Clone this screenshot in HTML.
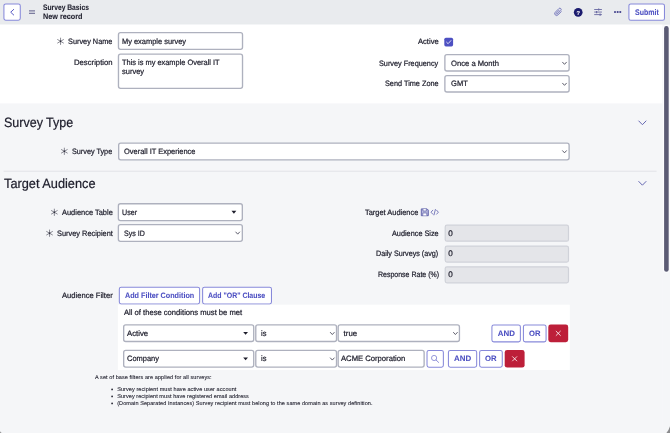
<!DOCTYPE html>
<html><head><meta charset="utf-8"><title>Survey Basics</title>
<style>
html,body{margin:0;padding:0;}
body{width:670px;height:433px;overflow:hidden;position:relative;background:#f5f6f8;font-family:"Liberation Sans",sans-serif;}
#w{position:absolute;left:0;top:0;width:670px;height:433px;will-change:transform;}
#g{position:absolute;left:0;top:0;display:block;}
.t{position:absolute;transform-origin:0 0;white-space:pre;line-height:10px;display:block;text-rendering:geometricPrecision;-webkit-text-stroke:0.22px currentColor;}
</style></head><body><div id="w">
<svg id="g" width="670" height="433" viewBox="0 0 670 433">
<rect x="0.00" y="0.00" width="670.00" height="24.40" rx="0.00" fill="#e9ebee"/>
<rect x="0.00" y="23.90" width="670.00" height="0.60" rx="0.00" fill="#e2e4e9"/>
<rect x="0.00" y="24.50" width="662.60" height="79.10" rx="0.00" fill="#fff"/>
<rect x="0.00" y="103.60" width="662.60" height="329.40" rx="0.00" fill="#f5f6f8"/>
<rect x="662.60" y="24.50" width="7.40" height="408.50" rx="0.00" fill="#f5f6f8"/>
<rect x="663.10" y="25.10" width="6.60" height="247.70" rx="3.30" fill="#fdfdfe"/>
<rect x="664.10" y="26.10" width="4.60" height="245.70" rx="2.30" fill="#5b5b74"/>
<path d="M0 431.0A2 2 0 0 0 2 433L0 433Z" fill="#6f6f6f"/>
<path d="M670 426.3Q668.8 430.5 666.4 433L670 433Z" fill="#8b8b8d"/>
<rect x="3.92" y="3.92" width="16.35" height="16.25" rx="1.88" fill="#fff" stroke="#8789da" stroke-width="1.05"/>
<g transform="translate(10.10 9.00)"><path d="M3.6 0.4 L0.6 3.2 L3.6 6" fill="none" stroke="#5a5cc4" stroke-width="1.0" stroke-linecap="round" stroke-linejoin="round"/></g>
<rect x="29.00" y="10.30" width="6.00" height="1.15" rx="0.00" fill="#707096"/>
<rect x="29.00" y="12.75" width="6.00" height="1.15" rx="0.00" fill="#707096"/>
<g transform="translate(558.3 11.9) rotate(45)" fill="none" stroke="#6668b6" stroke-width="0.8" stroke-linecap="round"><path d="M1.9 -2.2V2.4A1.9 1.9 0 0 1 -1.9 2.4V-2.8A1.3 1.3 0 0 1 0.7 -2.8V2.2A0.65 0.65 0 0 1 -0.6 2.2V-1.8"/></g>
<g transform="translate(573.90 8.05)"><circle cx="4.3" cy="4.3" r="4.35" fill="#1b1b6e"/></g>
<g transform="translate(594.00 8.20)"><g stroke="#6868a2" stroke-width="0.9" fill="none"><path d="M0.2 1.3H7.9M0.2 3.85H7.9M0.2 6.4H7.9"/><path d="M4.7 0.2V2.4M2.6 2.75V4.95M6.1 5.3V7.5" stroke-width="1.1"/></g></g>
<rect x="614.10" y="11.00" width="1.80" height="2.00" rx="0.50" fill="#4c4c92"/>
<rect x="616.75" y="11.00" width="1.80" height="2.00" rx="0.50" fill="#4c4c92"/>
<rect x="619.40" y="11.00" width="1.80" height="2.00" rx="0.50" fill="#4c4c92"/>
<rect x="628.92" y="3.92" width="35.55" height="16.35" rx="1.88" fill="#fff" stroke="#8789da" stroke-width="1.05"/>
<g transform="translate(60.55 41.30)"><g stroke="#3c3c4c" stroke-width="0.6" stroke-linecap="round"><path d="M0 -3.2V3.2M-2.9 -1.7L2.9 1.7M-2.9 1.7L2.9 -1.7"/></g><circle r="0.7" fill="#2a2a38"/></g>
<rect x="118.47" y="32.58" width="124.05" height="16.85" rx="2.12" fill="#fff" stroke="#aeb1be" stroke-width="1.35"/>
<rect x="118.47" y="54.08" width="124.05" height="34.35" rx="2.12" fill="#fff" stroke="#aeb1be" stroke-width="1.35"/>
<rect x="444.30" y="37.70" width="8.80" height="8.70" rx="1.60" fill="#4d50c2"/>
<g transform="translate(444.30 37.70)"><path d="M2.3 4.5 L3.8 6 L6.6 2.9" fill="none" stroke="#fff" stroke-width="0.8" stroke-linecap="round" stroke-linejoin="round"/></g>
<rect x="444.88" y="54.67" width="124.25" height="16.35" rx="2.12" fill="#fff" stroke="#aeb1be" stroke-width="1.35"/>
<g transform="translate(561.50 61.30)"><path d="M1.1 0.95 L3 3.05 L4.9 0.95" fill="none" stroke="#4e4e5e" stroke-width="0.9" stroke-linecap="round" stroke-linejoin="round"/></g>
<rect x="444.88" y="75.58" width="124.25" height="16.45" rx="2.12" fill="#fff" stroke="#aeb1be" stroke-width="1.35"/>
<g transform="translate(561.50 82.30)"><path d="M1.1 0.95 L3 3.05 L4.9 0.95" fill="none" stroke="#4e4e5e" stroke-width="0.9" stroke-linecap="round" stroke-linejoin="round"/></g>
<g transform="translate(637.50 119.50)"><path d="M1.3 1.5 L4.9 5.2 L8.5 1.5" fill="none" stroke="#6668b2" stroke-width="1.0" stroke-linecap="round" stroke-linejoin="round"/></g>
<g transform="translate(64.35 151.30)"><g stroke="#3c3c4c" stroke-width="0.6" stroke-linecap="round"><path d="M0 -3.2V3.2M-2.9 -1.7L2.9 1.7M-2.9 1.7L2.9 -1.7"/></g><circle r="0.7" fill="#2a2a38"/></g>
<rect x="118.67" y="143.07" width="450.45" height="16.75" rx="2.12" fill="#fff" stroke="#aeb1be" stroke-width="1.35"/>
<g transform="translate(561.50 149.80)"><path d="M1.1 0.95 L3 3.05 L4.9 0.95" fill="none" stroke="#4e4e5e" stroke-width="0.9" stroke-linecap="round" stroke-linejoin="round"/></g>
<rect x="3.60" y="170.80" width="653.00" height="0.70" rx="0.00" fill="#dadae0"/>
<g transform="translate(637.50 180.00)"><path d="M1.3 1.5 L4.9 5.2 L8.5 1.5" fill="none" stroke="#6668b2" stroke-width="1.0" stroke-linecap="round" stroke-linejoin="round"/></g>
<g transform="translate(54.35 212.30)"><g stroke="#3c3c4c" stroke-width="0.6" stroke-linecap="round"><path d="M0 -3.2V3.2M-2.9 -1.7L2.9 1.7M-2.9 1.7L2.9 -1.7"/></g><circle r="0.7" fill="#2a2a38"/></g>
<rect x="118.38" y="203.78" width="123.95" height="16.85" rx="2.12" fill="#fff" stroke="#aeb1be" stroke-width="1.35"/>
<g transform="translate(231.50 210.80)"><path d="M0 0H4.8L2.4 2.9Z" fill="#1d1d2b"/></g>
<g transform="translate(49.55 233.20)"><g stroke="#3c3c4c" stroke-width="0.6" stroke-linecap="round"><path d="M0 -3.2V3.2M-2.9 -1.7L2.9 1.7M-2.9 1.7L2.9 -1.7"/></g><circle r="0.7" fill="#2a2a38"/></g>
<rect x="118.38" y="224.57" width="123.95" height="16.75" rx="2.12" fill="#fff" stroke="#aeb1be" stroke-width="1.35"/>
<g transform="translate(234.70 231.10)"><path d="M1.1 0.95 L3 3.05 L4.9 0.95" fill="none" stroke="#4e4e5e" stroke-width="0.9" stroke-linecap="round" stroke-linejoin="round"/></g>
<g transform="translate(420.70 208.30)"><g fill="none" stroke="#5f61aa" stroke-width="0.95" stroke-linejoin="round"><path d="M0.6 0.6H6.4L7.6 1.8V7.4H0.6Z" fill="#b9bade"/><path d="M2.3 0.8V2.7H5.6V0.8" fill="#fff" stroke-width="0.7"/><path d="M2.1 7.2V4.7H6.1V7.2" fill="#fff" stroke-width="0.7"/></g></g>
<g transform="translate(430.50 208.80)"><g fill="none" stroke="#6365b0" stroke-width="0.85" stroke-linecap="round" stroke-linejoin="round"><path d="M2.3 1.4L0.5 3.4L2.3 5.4"/><path d="M6.1 1.4L7.9 3.4L6.1 5.4"/><path d="M4.9 0.7L3.5 6.1"/></g></g>
<rect x="445.20" y="225.20" width="123.30" height="16.00" rx="1.80" fill="#e4e5e9" stroke="#d0d2d9" stroke-width="1.2"/>
<rect x="445.20" y="246.10" width="123.30" height="16.00" rx="1.80" fill="#e4e5e9" stroke="#d0d2d9" stroke-width="1.2"/>
<rect x="445.20" y="266.80" width="123.30" height="16.00" rx="1.80" fill="#e4e5e9" stroke="#d0d2d9" stroke-width="1.2"/>
<rect x="119.33" y="287.22" width="80.25" height="16.75" rx="1.88" fill="#fff" stroke="#8789da" stroke-width="1.05"/>
<rect x="202.62" y="287.22" width="68.85" height="16.75" rx="1.88" fill="#fff" stroke="#8789da" stroke-width="1.05"/>
<rect x="117.90" y="304.70" width="451.90" height="65.30" rx="0.00" fill="#fff"/>
<rect x="123.67" y="324.88" width="130.05" height="16.65" rx="2.12" fill="#fff" stroke="#aeb1be" stroke-width="1.35"/>
<g transform="translate(243.20 331.90)"><path d="M0 0H4.8L2.4 2.9Z" fill="#1d1d2b"/></g>
<rect x="255.78" y="324.88" width="80.75" height="16.65" rx="2.12" fill="#fff" stroke="#aeb1be" stroke-width="1.35"/>
<g transform="translate(329.30 331.50)"><path d="M1.1 0.95 L3 3.05 L4.9 0.95" fill="none" stroke="#4e4e5e" stroke-width="0.9" stroke-linecap="round" stroke-linejoin="round"/></g>
<rect x="338.18" y="324.88" width="121.25" height="16.65" rx="2.12" fill="#fff" stroke="#aeb1be" stroke-width="1.35"/>
<g transform="translate(452.40 331.50)"><path d="M1.1 0.95 L3 3.05 L4.9 0.95" fill="none" stroke="#4e4e5e" stroke-width="0.9" stroke-linecap="round" stroke-linejoin="round"/></g>
<rect x="491.92" y="324.92" width="28.45" height="16.95" rx="1.88" fill="#fff" stroke="#8789da" stroke-width="1.05"/>
<rect x="523.42" y="324.92" width="22.65" height="16.95" rx="1.88" fill="#fff" stroke="#8789da" stroke-width="1.05"/>
<rect x="548.30" y="324.50" width="19.90" height="17.70" rx="2.40" fill="#bd1f39"/>
<g transform="translate(555.25 330.35)"><path d="M0.9 0.9L5.1 5.1M5.1 0.9L0.9 5.1" stroke="#fff" stroke-width="0.8" stroke-linecap="round"/></g>
<rect x="123.67" y="350.38" width="130.05" height="16.75" rx="2.12" fill="#fff" stroke="#aeb1be" stroke-width="1.35"/>
<g transform="translate(243.20 357.40)"><path d="M0 0H4.8L2.4 2.9Z" fill="#1d1d2b"/></g>
<rect x="255.78" y="350.38" width="80.75" height="16.75" rx="2.12" fill="#fff" stroke="#aeb1be" stroke-width="1.35"/>
<g transform="translate(329.30 357.00)"><path d="M1.1 0.95 L3 3.05 L4.9 0.95" fill="none" stroke="#4e4e5e" stroke-width="0.9" stroke-linecap="round" stroke-linejoin="round"/></g>
<rect x="338.18" y="350.38" width="85.95" height="16.75" rx="2.12" fill="#fff" stroke="#aeb1be" stroke-width="1.35"/>
<rect x="427.02" y="350.42" width="16.35" height="16.75" rx="1.88" fill="#fff" stroke="#8789da" stroke-width="1.05"/>
<g transform="translate(430.20 354.30)"><circle cx="3.9" cy="3.7" r="2.6" fill="none" stroke="#7b7dd0" stroke-width="0.8"/><path d="M5.9 5.7L8.4 8.1" stroke="#7b7dd0" stroke-width="0.9" stroke-linecap="round"/></g>
<rect x="448.42" y="350.42" width="28.25" height="16.75" rx="1.88" fill="#fff" stroke="#8789da" stroke-width="1.05"/>
<rect x="479.62" y="350.42" width="22.65" height="16.75" rx="1.88" fill="#fff" stroke="#8789da" stroke-width="1.05"/>
<rect x="504.70" y="350.00" width="19.90" height="17.60" rx="2.40" fill="#bd1f39"/>
<g transform="translate(511.65 355.80)"><path d="M0.9 0.9L5.1 5.1M5.1 0.9L0.9 5.1" stroke="#fff" stroke-width="0.8" stroke-linecap="round"/></g>
<circle cx="112.1" cy="389.40" r="0.85" fill="#1d1d2b"/>
<circle cx="112.1" cy="396.40" r="0.85" fill="#1d1d2b"/>
<circle cx="112.1" cy="403.40" r="0.85" fill="#1d1d2b"/>
</svg>
<span class="t" style="left:43.10px;top:3px;font-size:8.0px;transform:scaleX(0.8391);color:#1d1d2b;font-weight:700;-webkit-text-stroke-width:0.08px;">Survey Basics</span>
<span class="t" style="left:43.10px;top:12px;font-size:8.0px;transform:scaleX(0.9066);color:#1d1d2b;font-weight:700;-webkit-text-stroke-width:0.08px;">New record</span>
<span class="t" style="left:576.60px;top:9px;font-size:5.8px;color:#fff;font-weight:700;-webkit-text-stroke-width:0.08px;-webkit-text-stroke-width:0.1px;">?</span>
<span class="t" style="left:634.80px;top:8px;font-size:8.2px;transform:scaleX(0.8564);color:#4d50c2;font-weight:700;-webkit-text-stroke-width:0.08px;">Submit</span>
<span class="t" style="left:68.00px;top:37px;font-size:7.8px;transform:scaleX(0.9396);color:#1d1d2b;">Survey Name</span>
<span class="t" style="left:121.90px;top:37px;font-size:7.8px;transform:scaleX(0.9540);color:#1d1d2b;">My example survey</span>
<span class="t" style="left:73.80px;top:58px;font-size:7.8px;transform:scaleX(0.9893);color:#1d1d2b;">Description</span>
<span class="t" style="left:121.90px;top:58px;font-size:7.8px;transform:scaleX(0.9502);color:#1d1d2b;">This is my example Overall IT</span>
<span class="t" style="left:121.90px;top:67px;font-size:7.8px;transform:scaleX(0.9621);color:#1d1d2b;">survey</span>
<span class="t" style="left:417.90px;top:37px;font-size:7.8px;transform:scaleX(0.9746);color:#1d1d2b;">Active</span>
<span class="t" style="left:379.40px;top:59px;font-size:7.8px;transform:scaleX(0.9353);color:#1d1d2b;">Survey Frequency</span>
<span class="t" style="left:450.70px;top:59px;font-size:7.8px;transform:scaleX(0.9798);color:#1d1d2b;">Once a Month</span>
<span class="t" style="left:385.00px;top:79px;font-size:7.8px;transform:scaleX(0.9366);color:#1d1d2b;">Send Time Zone</span>
<span class="t" style="left:450.70px;top:79px;font-size:7.8px;transform:scaleX(0.9693);color:#1d1d2b;">GMT</span>
<span class="t" style="left:3.80px;top:118px;font-size:13.5px;transform:scaleX(0.9253);color:#1d1d2b;">Survey Type</span>
<span class="t" style="left:72.00px;top:147px;font-size:7.8px;transform:scaleX(0.9303);color:#1d1d2b;">Survey Type</span>
<span class="t" style="left:124.00px;top:147px;font-size:7.8px;transform:scaleX(0.9552);color:#1d1d2b;">Overall IT Experience</span>
<span class="t" style="left:4.00px;top:179px;font-size:13.4px;transform:scaleX(0.9531);color:#1d1d2b;">Target Audience</span>
<span class="t" style="left:62.00px;top:208px;font-size:7.8px;transform:scaleX(0.9550);color:#1d1d2b;">Audience Table</span>
<span class="t" style="left:121.90px;top:208px;font-size:7.8px;transform:scaleX(0.9110);color:#1d1d2b;">User</span>
<span class="t" style="left:56.90px;top:229px;font-size:7.8px;transform:scaleX(0.9481);color:#1d1d2b;">Survey Recipient</span>
<span class="t" style="left:123.80px;top:229px;font-size:7.8px;transform:scaleX(0.9055);color:#1d1d2b;">Sys ID</span>
<span class="t" style="left:365.40px;top:208px;font-size:7.8px;transform:scaleX(0.9528);color:#1d1d2b;">Target Audience</span>
<span class="t" style="left:391.90px;top:229px;font-size:7.8px;transform:scaleX(0.9365);color:#1d1d2b;">Audience Size</span>
<span class="t" style="left:448.20px;top:229px;font-size:8.1px;color:#1d1d2b;">0</span>
<span class="t" style="left:376.40px;top:249px;font-size:7.8px;transform:scaleX(0.9199);color:#1d1d2b;">Daily Surveys (avg)</span>
<span class="t" style="left:448.20px;top:249px;font-size:8.1px;color:#1d1d2b;">0</span>
<span class="t" style="left:377.50px;top:270px;font-size:7.8px;transform:scaleX(0.8977);color:#1d1d2b;">Response Rate (%)</span>
<span class="t" style="left:448.20px;top:270px;font-size:8.1px;color:#1d1d2b;">0</span>
<span class="t" style="left:61.80px;top:291px;font-size:7.8px;transform:scaleX(0.9745);color:#1d1d2b;">Audience Filter</span>
<span class="t" style="left:125.00px;top:291px;font-size:7.9px;transform:scaleX(0.9129);color:#4d50c2;font-weight:700;-webkit-text-stroke-width:0.08px;">Add Filter Condition</span>
<span class="t" style="left:208.40px;top:291px;font-size:7.9px;transform:scaleX(0.8816);color:#4d50c2;font-weight:700;-webkit-text-stroke-width:0.08px;">Add &quot;OR&quot; Clause</span>
<span class="t" style="left:123.70px;top:308px;font-size:7.8px;transform:scaleX(0.9772);color:#1d1d2b;">All of these conditions must be met</span>
<span class="t" style="left:126.90px;top:329px;font-size:7.8px;transform:scaleX(0.9934);color:#1d1d2b;">Active</span>
<span class="t" style="left:260.80px;top:329px;font-size:7.8px;transform:scaleX(0.9589);color:#1d1d2b;">is</span>
<span class="t" style="left:343.40px;top:329px;font-size:7.8px;letter-spacing:0.120px;color:#1d1d2b;">true</span>
<span class="t" style="left:497.80px;top:329px;font-size:7.9px;letter-spacing:0.040px;color:#4d50c2;font-weight:700;-webkit-text-stroke-width:0.08px;">AND</span>
<span class="t" style="left:529.20px;top:329px;font-size:7.9px;transform:scaleX(0.9705);color:#4d50c2;font-weight:700;-webkit-text-stroke-width:0.08px;">OR</span>
<span class="t" style="left:126.90px;top:354px;font-size:7.8px;transform:scaleX(0.9585);color:#1d1d2b;">Company</span>
<span class="t" style="left:260.80px;top:354px;font-size:7.8px;transform:scaleX(0.9589);color:#1d1d2b;">is</span>
<span class="t" style="left:340.90px;top:354px;font-size:7.8px;transform:scaleX(0.9823);color:#1d1d2b;">ACME Corporation</span>
<span class="t" style="left:454.00px;top:354px;font-size:7.9px;letter-spacing:0.090px;color:#4d50c2;font-weight:700;-webkit-text-stroke-width:0.08px;">AND</span>
<span class="t" style="left:485.30px;top:354px;font-size:7.9px;transform:scaleX(0.9789);color:#4d50c2;font-weight:700;-webkit-text-stroke-width:0.08px;">OR</span>
<span class="t" style="left:95.00px;top:373px;font-size:5.5px;letter-spacing:0.090px;color:#1d1d2b;-webkit-text-stroke-width:0.1px;">A set of base filters are applied for all surveys:</span>
<span class="t" style="left:117.20px;top:385px;font-size:5.5px;letter-spacing:0.088px;color:#1d1d2b;-webkit-text-stroke-width:0.1px;">Survey recipient must have active user account</span>
<span class="t" style="left:117.20px;top:392px;font-size:5.5px;letter-spacing:0.072px;color:#1d1d2b;-webkit-text-stroke-width:0.1px;">Survey recipient must have registered email address</span>
<span class="t" style="left:117.20px;top:399px;font-size:5.5px;letter-spacing:0.085px;color:#1d1d2b;-webkit-text-stroke-width:0.1px;">(Domain Separated Instances) Survey recipient must belong to the same domain as survey definition.</span>
</div></body></html>
